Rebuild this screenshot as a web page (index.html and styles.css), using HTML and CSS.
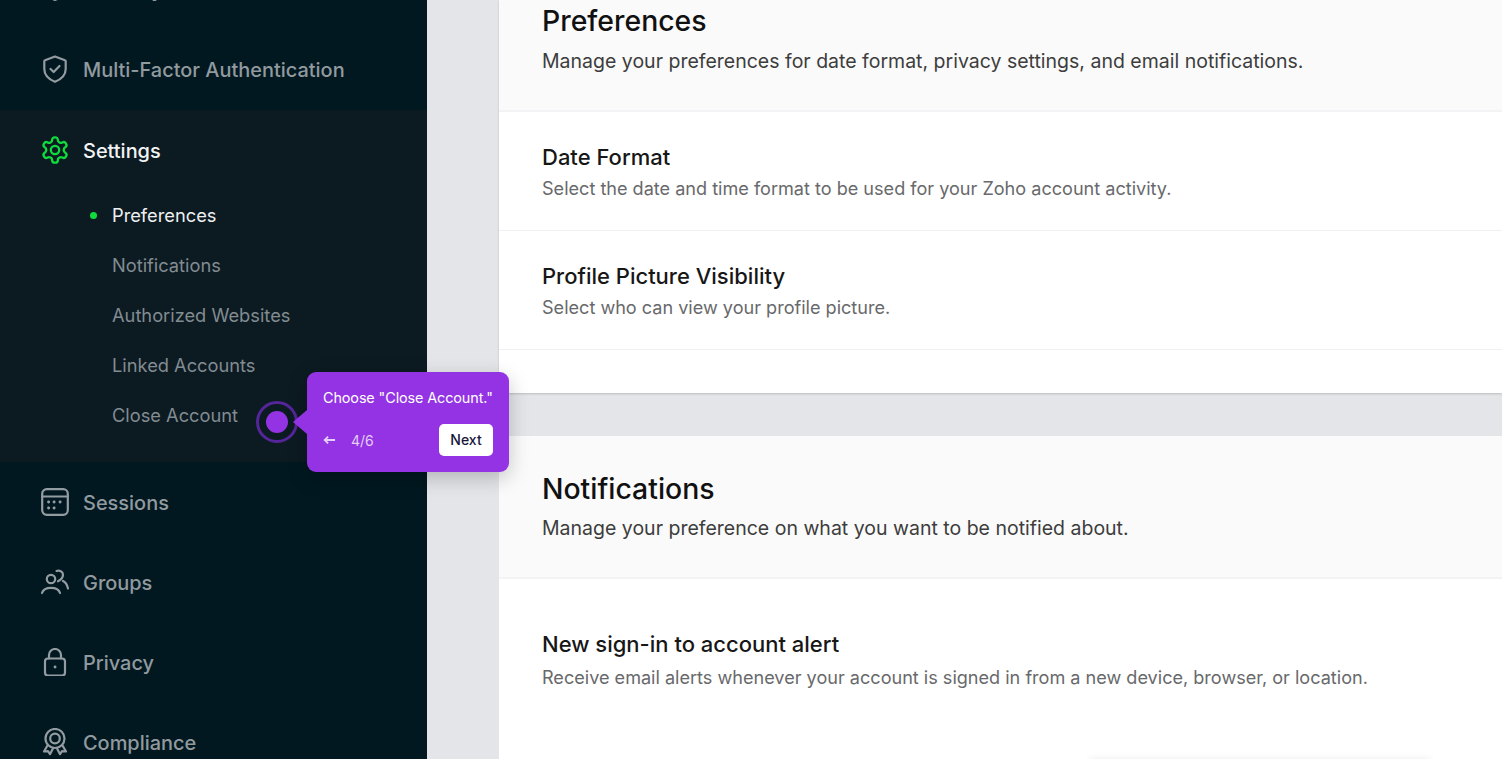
FILE: index.html
```html
<!DOCTYPE html>
<html lang="en">
<head>
<meta charset="utf-8">
<title>Zoho Accounts - Preferences</title>
<link rel="stylesheet" href="styles.css">
</head>
<body>
<div class="page">
  <aside class="sidebar">
    <div class="nav-item">
      <svg class="icon" viewBox="0 0 28 28"><path d="M14 3l9 3v8c0 5.500-4 9-9 11-5-2-9-5.500-9-11V6z"/></svg>
      <span>Security</span>
    </div>
    <div class="nav-item">
      <svg class="icon" viewBox="0 0 28 28"><path d="M14 1.500l10 3.700a1 1 0 0 1 .7 1V14c0 6-4.500 10.300-10.700 12.800C7.800 24.300 3.300 20 3.300 14V6.200a1 1 0 0 1 .7-1z"/><path d="M9.500 14l3.200 3 5.800-6"/></svg>
      <span>Multi-Factor Authentication</span>
    </div>
    <section class="nav-group">
      <div class="nav-item active">
        <svg class="icon gear" viewBox="1 1 22 22"><path d="M12.220 2h-.44a2 2 0 0 0-2 2v.18a2 2 0 0 1-1 1.730l-.43.25a2 2 0 0 1-2 0l-.15-.08a2 2 0 0 0-2.730.73l-.22.38a2 2 0 0 0 .73 2.730l.15.1a2 2 0 0 1 1 1.720v.51a2 2 0 0 1-1 1.740l-.15.09a2 2 0 0 0-.73 2.730l.22.38a2 2 0 0 0 2.730.73l.15-.08a2 2 0 0 1 2 0l.43.25a2 2 0 0 1 1 1.730V20a2 2 0 0 0 2 2h.44a2 2 0 0 0 2-2v-.18a2 2 0 0 1 1-1.730l.43-.25a2 2 0 0 1 2 0l.15.08a2 2 0 0 0 2.730-.73l.22-.39a2 2 0 0 0-.73-2.730l-.15-.08a2 2 0 0 1-1-1.740v-.5a2 2 0 0 1 1-1.740l.15-.09a2 2 0 0 0 .73-2.730l-.22-.38a2 2 0 0 0-2.730-.73l-.15.08a2 2 0 0 1-2 0l-.43-.25a2 2 0 0 1-1-1.730V4a2 2 0 0 0-2-2z"/><circle cx="12" cy="12" r="3.300"/></svg>
        <span>Settings</span>
      </div>
      <ul class="sub-list">
        <li class="sub-item current">Preferences</li>
        <li class="sub-item">Notifications</li>
        <li class="sub-item">Authorized Websites</li>
        <li class="sub-item">Linked Accounts</li>
        <li class="sub-item">Close Account</li>
      </ul>
    </section>
    <div class="nav-item">
      <svg class="icon" viewBox="0 0 28 28"><rect x="1.200" y="1.200" width="25.600" height="25.600" rx="4.500"/><path d="M1.200 8.500h25.600"/><path class="dots" d="M7.500 14h.2M13 14h.2M19 14h.2M7.500 20h.2M13 20h.2"/></svg>
      <span>Sessions</span>
    </div>
    <div class="nav-item">
      <svg class="icon" viewBox="0 0 28 28"><circle cx="10" cy="11" r="4.200"/><path d="M1 25c1-3.300 4.500-5.200 9-5.200s8 1.900 9 5.200"/><path d="M15.500 3c2.800-1 6.500.2 6.500 3.800 0 3-2 5-5 6.500"/><path d="M22 13c2.500 1.300 4.300 4 5 7.500"/></svg>
      <span>Groups</span>
    </div>
    <div class="nav-item">
      <svg class="icon" viewBox="0 0 28 28"><rect x="4" y="10.500" width="20" height="17" rx="3"/><path d="M8 10.500V7a6 6 0 0 1 12 0v3.500"/><path class="dots" d="M14 19h.1"/></svg>
      <span>Privacy</span>
    </div>
    <div class="nav-item">
      <svg class="icon" viewBox="0 0 28 28"><circle cx="14" cy="10.500" r="9.500"/><circle cx="14" cy="10.500" r="4.800"/><path d="M6.500 17.500l-3.500 6 4-.3 2 3 2.800-5.500M21.500 17.500l3.500 6-4-.3-2 3-2.800-5.500"/></svg>
      <span>Compliance</span>
    </div>
  </aside>

  <main class="main">
    <section class="panel first">
      <header class="panel-head">
        <h2>Preferences</h2>
        <p>Manage your preferences for date format, privacy settings, and email notifications.</p>
      </header>
      <div class="row">
        <h3>Date Format</h3>
        <p>Select the date and time format to be used for your Zoho account activity.</p>
      </div>
      <div class="row">
        <h3>Profile Picture Visibility</h3>
        <p>Select who can view your profile picture.</p>
      </div>
    </section>
    <section class="panel second">
      <header class="panel-head">
        <h2>Notifications</h2>
        <p>Manage your preference on what you want to be notified about.</p>
      </header>
      <div class="row plain">
        <h3>New sign-in to account alert</h3>
        <p>Receive email alerts whenever your account is signed in from a new device, browser, or location.</p>
      </div>
      <div class="float-card"></div>
    </section>
  </main>

  <div class="hotspot"><span class="hotspot-dot"></span></div>
  <div class="tooltip">
    <p class="tooltip-text">Choose "Close Account."</p>
    <div class="tooltip-foot">
      <svg class="back" viewBox="0 0 14 10"><path d="M13 5H2M5.500 1.300L1.800 5l3.700 3.700"/></svg>
      <span class="step">4/6</span>
      <button class="next">Next</button>
    </div>
  </div>
</div>
</body>
</html>
```
FILE: styles.css
```css
* { box-sizing: border-box; }
html, body { margin: 0; height: 100%; overflow: hidden; }
body { font-family: "Inter", "Noto Sans", sans-serif; background: #e3e5e9; }
.page { position: relative; display: flex; width: 1502px; height: 759px; overflow: hidden; }

.sidebar { flex: 0 0 427px; height: 759px; background: #011820; color: #919a9f; }
.sidebar > :first-child { margin-top: -51px; }
.nav-item { display: flex; align-items: center; height: 80px; padding-left: 41px; gap: 14px; font-size: 19.950px; font-weight: 500; }
.nav-item span { padding-top: 2px; }
.icon { width: 28px; height: 28px; flex: none; fill: none; stroke: #939ca1; stroke-width: 2.200; stroke-linecap: round; stroke-linejoin: round; }
.icon .dots { stroke-width: 2.800; }
.nav-group { background: #0c1a22; padding-bottom: 22px; margin-top: 1px; }
.nav-item.active { color: #f2f4f4; }
.nav-item.active span { padding-top: 1px; }
.nav-item.active .icon { stroke: #0fdc3c; }
.nav-item.active .gear { stroke-width: 1.800; }
.sub-list { list-style: none; margin: 0; padding: 0 0 0 112px; }
.sub-item { position: relative; height: 50px; line-height: 50px; font-size: 18.250px; color: #828c91; }
.sub-item.current { color: #eef0f0; }
.sub-item.current::before { content: ""; position: absolute; left: -22px; top: 21.500px; width: 7px; height: 7px; border-radius: 50%; background: #0fdc3c; }

.main { flex: 1; padding-left: 72px; min-width: 0; }
.panel { background: #fff; }
.panel.first { box-shadow: 0 1px 2px rgba(0,0,0,.18); padding-bottom: 43px; }
.panel.second { margin-top: 43px; height: 400px; overflow: hidden; }
.panel-head { background: #fafafa; padding-left: 43px; border-bottom: 2px solid #f3f3f5; }
.first .panel-head { height: 112px; padding-top: 1px; }
.second .panel-head { height: 143px; padding-top: 33px; }
h2 { margin: 0; font-size: 28.400px; line-height: 40px; font-weight: 500; color: #111; }
.panel-head p { margin: 0; padding-top: 4px; font-size: 19.500px; line-height: 32px; color: #3d3d3d; }
.second .panel-head p { padding-top: 3px; }
.row { height: 119px; padding: 28px 0 0 43px; border-bottom: 1px solid #f0f0f2; }
.row.plain { border: 0; height: auto; padding-top: 47px; }
h3 { margin: 0; font-size: 22px; line-height: 34px; font-weight: 450; color: #171717; }
.row p { margin: 0; font-size: 18.080px; line-height: 28px; color: #68696b; }
.plain h3 { line-height: 36px; }
.plain p { padding-top: 1px; }
.float-card { width: 340px; height: 40px; margin: 69px 0 0 591px; box-shadow: 0 -1px 8px rgba(0,0,0,.08); }

.hotspot { position: absolute; left: 256px; top: 401px; width: 42px; height: 42px; border: 3px solid #55259a; border-radius: 50%; display: flex; align-items: center; justify-content: center; }
.hotspot-dot { width: 22px; height: 22px; border-radius: 50%; background: #9333e4; }
.tooltip { position: absolute; left: 307px; top: 372px; width: 202px; height: 100px; padding: 17px 16px 0; background: #9333e4; border-radius: 9px; box-shadow: 0 6px 20px rgba(0,0,0,.22); color: #fff; }
.tooltip::after { content: ""; position: absolute; left: -14px; top: 38px; width: 0; height: 0; border-style: solid; border-width: 12px 14px 12px 0; border-color: transparent #9333e4 transparent transparent; }
.tooltip-text { margin: 0; font-size: 14.400px; line-height: 18px; white-space: nowrap; letter-spacing: -.1px; }
.tooltip-foot { display: flex; align-items: center; margin-top: 17px; height: 32px; }
.back { width: 13px; height: 10px; fill: none; stroke: #e4cdf8; stroke-width: 2; }
.step { margin-left: 15px; font-size: 14px; color: #e4cdf8; }
.next { margin-left: auto; width: 54px; height: 32px; padding: 0 0 2px; border: 0; border-radius: 5px; background: #fff; color: #17163a; font: 500 14px "Inter", sans-serif; }
```
